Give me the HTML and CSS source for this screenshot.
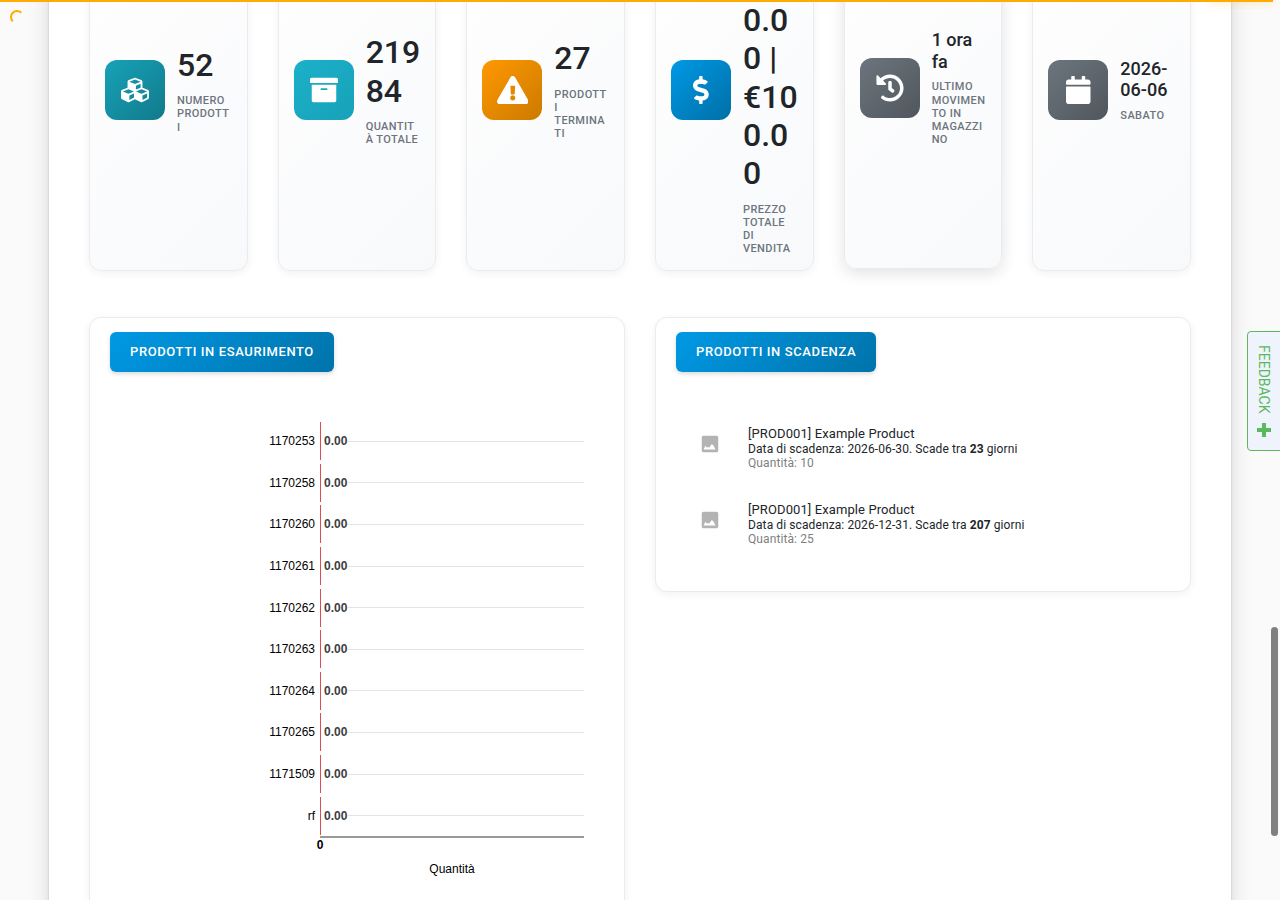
FILE: index.html
```html
<!DOCTYPE html>
<html lang="it">
<head>
    <meta charset="UTF-8">
    <meta name="viewport" content="width=device-width, initial-scale=1.0">
    <title>Dashboard magazzino</title>
    <link rel="stylesheet" href="styles.css">
</head>
<body>
    <!-- Barra di caricamento -->
    <div class="progress-bar"></div>
    <div class="spinner"></div>

    <main class="page">
        <!-- Statistiche -->
        <section class="stats">
            <div class="stat-card">
                <div class="stat-icon icon-teal">
                    <svg height="28" viewBox="0 0 512 512"><path d="M488.6 250.2L392 214V105.5c0-15-9.3-28.4-23.4-33.7l-100-37.5c-8.1-3.1-17.1-3.1-25.3 0l-100 37.5c-14.1 5.3-23.4 18.7-23.4 33.7V214l-96.6 36.2C9.3 255.5 0 268.9 0 283.9V394c0 13.6 7.7 26.1 19.9 32.2l100 50c10.1 5.1 22.1 5.1 32.2 0l103.9-52 103.9 52c10.1 5.1 22.1 5.1 32.2 0l100-50c12.2-6.1 19.9-18.6 19.9-32.2V283.9c0-15-9.3-28.4-23.4-33.7zM358 214.8l-85 31.9v-68.2l85-37v73.3zM154 104.1l102-38.2 102 38.2v.6l-102 41.4-102-41.4v-.6zm84 291.1l-85 42.5v-79.1l85-38.8v75.4zm0-112l-102 41.4-102-41.4v-.6l102-38.2 102 38.2v.6zm240 112l-85 42.5v-79.1l85-38.8v75.4zm0-112l-102 41.4-102-41.4v-.6l102-38.2 102 38.2v.6z"/></svg>
                </div>
                <div class="stat-content">
                    <div class="stat-number">52</div>
                    <div class="stat-label">Numero prodotti</div>
                </div>
            </div>
            <div class="stat-card">
                <div class="stat-icon icon-cyan">
                    <svg height="28" viewBox="0 0 512 512"><path d="M32 448c0 17.7 14.3 32 32 32h384c17.7 0 32-14.3 32-32V160H32v288zm160-212c0-6.6 5.4-12 12-12h104c6.6 0 12 5.4 12 12v8c0 6.6-5.4 12-12 12H204c-6.6 0-12-5.4-12-12v-8zM480 32H32C14.3 32 0 46.3 0 64v48c0 8.8 7.2 16 16 16h480c8.8 0 16-7.2 16-16V64c0-17.7-14.3-32-32-32z"/></svg>
                </div>
                <div class="stat-content">
                    <div class="stat-number">21984</div>
                    <div class="stat-label">Quantità totale</div>
                </div>
            </div>
            <div class="stat-card">
                <div class="stat-icon icon-orange">
                    <svg height="28" viewBox="0 0 576 512"><path d="M569.517 440.013C587.975 472.007 564.806 512 527.94 512H48.054c-36.937 0-59.999-40.055-41.577-71.987L246.423 23.985c18.467-32.009 64.72-31.951 83.154 0l239.94 416.028zM288 354c-25.405 0-46 20.595-46 46s20.595 46 46 46 46-20.595 46-46-20.595-46-46-46zm-43.673-165.346l7.418 136c.347 6.364 5.609 11.346 11.982 11.346h48.546c6.373 0 11.635-4.982 11.982-11.346l7.418-136c.375-6.874-5.098-12.654-11.982-12.654h-63.383c-6.884 0-12.356 5.78-11.981 12.654z"/></svg>
                </div>
                <div class="stat-content">
                    <div class="stat-number">27</div>
                    <div class="stat-label">Prodotti terminati</div>
                </div>
            </div>
            <div class="stat-card">
                <div class="stat-icon icon-blue">
                    <svg height="28" viewBox="0 0 288 512"><path d="M209.2 233.4l-108-31.6C88.7 198.2 80 186.5 80 173.5c0-16.3 13.2-29.5 29.5-29.5h66.3c12.2 0 24.2 3.7 34.2 10.5 6.1 4.1 14.3 3.1 19.5-2l34.8-34c7.1-6.9 6.1-18.4-1.8-24.5C238 74.8 207.4 64.1 176 64V16c0-8.8-7.2-16-16-16h-32c-8.8 0-16 7.2-16 16v48h-2.5C45.8 64-5.4 118.7.5 183.6c4.2 46.1 39.4 83.6 83.8 96.6l102.5 30c12.5 3.7 21.2 15.3 21.2 28.3 0 16.3-13.2 29.5-29.5 29.5h-66.3C100 368 88 364.3 78 357.5c-6.1-4.1-14.3-3.1-19.5 2l-34.8 34c-7.1 6.9-6.1 18.4 1.8 24.5 24.5 19.2 55.1 29.9 86.5 30v48c0 8.8 7.2 16 16 16h32c8.8 0 16-7.2 16-16v-48.2c46.6-.9 90.3-28.6 105.7-72.7 21.5-61.6-14.6-124.8-72.5-141.7z"/></svg>
                </div>
                <div class="stat-content">
                    <div class="stat-number">€100000.00 | €100.00</div>
                    <div class="stat-label">Prezzo totale di vendita</div>
                </div>
            </div>
            <div class="stat-card raised">
                <div class="stat-icon icon-gray">
                    <svg height="28" viewBox="0 0 512 512"><path d="M504 255.531c.253 136.64-111.18 248.372-247.82 248.468-59.015.042-113.223-20.53-155.822-54.911-11.077-8.94-11.905-25.541-1.839-35.607l11.267-11.267c8.609-8.609 22.353-9.551 31.891-1.984C173.062 425.135 212.781 440 256 440c101.705 0 184-82.311 184-184 0-101.705-82.311-184-184-184-48.814 0-93.149 18.969-126.068 49.932l50.754 50.754c10.08 10.08 2.941 27.314-11.313 27.314H24c-8.837 0-16-7.163-16-16V38.627c0-14.254 17.234-21.393 27.314-11.314l49.372 49.372C129.209 34.136 189.552 8 256 8c136.81 0 247.747 110.78 248 247.531zm-180.912 78.784l9.823-12.63c8.138-10.463 6.253-25.542-4.21-33.679L288 256.349V152c0-13.255-10.745-24-24-24h-16c-13.255 0-24 10.745-24 24v135.651l65.409 50.874c10.463 8.137 25.541 6.253 33.679-4.21z"/></svg>
                </div>
                <div class="stat-content">
                    <div class="stat-number small">1 ora fa</div>
                    <div class="stat-label">Ultimo movimento in magazzino</div>
                </div>
            </div>
            <div class="stat-card">
                <div class="stat-icon icon-gray">
                    <svg height="28" viewBox="0 0 448 512"><path d="M12 192h424c6.6 0 12 5.4 12 12v260c0 26.5-21.5 48-48 48H48c-26.5 0-48-21.5-48-48V204c0-6.6 5.4-12 12-12zm436-44v-36c0-26.5-21.5-48-48-48h-48V12c0-6.6-5.4-12-12-12h-40c-6.6 0-12 5.4-12 12v52H160V12c0-6.6-5.4-12-12-12h-40c-6.6 0-12 5.4-12 12v52H48C21.5 64 0 85.5 0 112v36c0 6.6 5.4 12 12 12h424c6.6 0 12-5.4 12-12z"/></svg>
                </div>
                <div class="stat-content">
                    <div class="stat-number small">2026-06-06</div>
                    <div class="stat-label">Sabato</div>
                </div>
            </div>
        </section>

        <section class="panels">
            <!-- Grafico prodotti in esaurimento -->
            <div class="panel">
                <h3 class="panel-title">Prodotti in esaurimento</h3>
                <div class="chart">
                    <div class="chart-rows">
                        <div class="chart-row"><span class="chart-name">1170253</span><div class="chart-plot"><span class="chart-value">0.00</span></div></div>
                        <div class="chart-row"><span class="chart-name">1170258</span><div class="chart-plot"><span class="chart-value">0.00</span></div></div>
                        <div class="chart-row"><span class="chart-name">1170260</span><div class="chart-plot"><span class="chart-value">0.00</span></div></div>
                        <div class="chart-row"><span class="chart-name">1170261</span><div class="chart-plot"><span class="chart-value">0.00</span></div></div>
                        <div class="chart-row"><span class="chart-name">1170262</span><div class="chart-plot"><span class="chart-value">0.00</span></div></div>
                        <div class="chart-row"><span class="chart-name">1170263</span><div class="chart-plot"><span class="chart-value">0.00</span></div></div>
                        <div class="chart-row"><span class="chart-name">1170264</span><div class="chart-plot"><span class="chart-value">0.00</span></div></div>
                        <div class="chart-row"><span class="chart-name">1170265</span><div class="chart-plot"><span class="chart-value">0.00</span></div></div>
                        <div class="chart-row"><span class="chart-name">1171509</span><div class="chart-plot"><span class="chart-value">0.00</span></div></div>
                        <div class="chart-row"><span class="chart-name">rf</span><div class="chart-plot"><span class="chart-value">0.00</span></div></div>
                    </div>
                    <div class="chart-axis">
                        <div class="chart-tick">0</div>
                        <div class="chart-caption">Quantità</div>
                    </div>
                </div>
            </div>

            <!-- Elenco prodotti in scadenza -->
            <div class="panel">
                <h3 class="panel-title">Prodotti in scadenza</h3>
                <ul class="products">
                    <li class="product">
                        <svg class="product-icon" width="22" height="22" viewBox="0 0 24 24"><path d="M21 19V5c0-1.100-.9-2-2-2H5c-1.100 0-2 .9-2 2v14c0 1.100.9 2 2 2h14c1.100 0 2-.9 2-2zM5 18l2-4 2 2 1-1 1 1 3-4 2 2 2 4z"/></svg>
                        <div>
                            <div class="product-name">[PROD001] Example Product</div>
                            <div class="product-expiry">Data di scadenza: 2026-06-30. Scade tra <b>23</b> giorni</div>
                            <div class="product-qty">Quantità: 10</div>
                        </div>
                    </li>
                    <li class="product">
                        <svg class="product-icon" width="22" height="22" viewBox="0 0 24 24"><path d="M21 19V5c0-1.100-.9-2-2-2H5c-1.100 0-2 .9-2 2v14c0 1.100.9 2 2 2h14c1.100 0 2-.9 2-2zM5 18l2-4 2 2 1-1 1 1 3-4 2 2 2 4z"/></svg>
                        <div>
                            <div class="product-name">[PROD001] Example Product</div>
                            <div class="product-expiry">Data di scadenza: 2026-12-31. Scade tra <b>207</b> giorni</div>
                            <div class="product-qty">Quantità: 25</div>
                        </div>
                    </li>
                </ul>
            </div>
        </section>
    </main>

    <button class="feedback" type="button">
        FEEDBACK
        <svg width="14" height="14" viewBox="0 0 14 14"><path d="M5 0h4v5h5v4H9v5H5V9H0V5h5z"/></svg>
    </button>
    <div class="scroll-thumb"></div>
</body>
</html>
```

FILE: styles.css
```css
* {
    box-sizing: border-box;
}
body {
    margin: 0;
    height: 100vh;
    overflow: hidden;
    font-family: Roboto, sans-serif;
    color: #212529;
    background-color: #fafafa;
}
.progress-bar {
    position: fixed;
    top: 0;
    left: 0;
    right: 7px;
    height: 2px;
    background-color: #ffab00;
    z-index: 10;
}
.progress-bar::after {
    content: "";
    position: absolute;
    right: 0;
    width: 64px;
    height: 2px;
    box-shadow: 0 0 8px rgba(255, 171, 0, 0.6);
}
.spinner {
    position: fixed;
    top: 10px;
    left: 10px;
    width: 14px;
    height: 14px;
    border: 2px solid transparent;
    border-top-color: #ffab00;
    border-left-color: #ffab00;
    border-radius: 50%;
    z-index: 10;
}
.page {
    margin: -132px 49px 0;
    padding: 40px;
    min-height: 1100px;
    background-color: #fff;
    box-shadow: 0 0 2px rgba(0, 0, 0, 0.2), 0 0 20px rgba(0, 0, 0, 0.14);
}

/* Statistiche */
.stats {
    display: grid;
    grid-template-columns: repeat(6, 1fr);
    gap: 30px;
    margin-bottom: 46px;
}
.stat-card {
    display: flex;
    align-items: center;
    gap: 12px;
    min-width: 0;
    padding: 15px;
    border: 1px solid #e9ecef;
    border-radius: 12px;
    background: linear-gradient(135deg, #fff, #f8f9fb);
    box-shadow: 0 2px 8px rgba(0, 0, 0, 0.06);
}
.stat-card.raised {
    transform: translateY(-2px);
    box-shadow: 0 4px 16px rgba(0, 0, 0, 0.12);
}
.stat-icon {
    display: flex;
    align-items: center;
    justify-content: center;
    flex-shrink: 0;
    width: 60px;
    height: 60px;
    border-radius: 12px;
}
.stat-icon svg {
    fill: #fff;
}
.icon-teal {
    background: linear-gradient(135deg, #17a2b8, #117a8b);
}
.icon-cyan {
    background: linear-gradient(135deg, #1cb0ca, #17a2b8);
}
.icon-orange {
    background: linear-gradient(135deg, #ff9800, #cc7a00);
}
.icon-blue {
    background: linear-gradient(135deg, #0099e5, #006fa6);
}
.icon-gray {
    background: linear-gradient(135deg, #6c757d, #50565e);
}
.stat-content {
    flex: 1;
    min-width: 0;
    overflow-wrap: anywhere;
}
.stat-number {
    margin-bottom: 10px;
    font-size: 32px;
    font-weight: 500;
    line-height: 1.2;
}
.stat-number.small {
    margin-bottom: 8px;
    font-size: 18px;
}
.stat-label {
    font-size: 11px;
    font-weight: 500;
    line-height: 1.2;
    letter-spacing: 0.4px;
    text-transform: uppercase;
    color: #6c757d;
}

/* Pannelli */
.panels {
    display: grid;
    grid-template-columns: 1fr 1fr;
    align-items: start;
    gap: 30px;
}
.panel {
    padding: 14px 20px 20px;
    border: 1px solid #e9ecef;
    border-radius: 12px;
    background-color: #fff;
    box-shadow: 0 2px 8px rgba(0, 0, 0, 0.06);
}
.panel-title {
    display: inline-block;
    margin: 0;
    padding: 0 20px;
    border-radius: 6px;
    background: linear-gradient(135deg, #0099e5, #0073aa);
    box-shadow: 0 2px 4px rgba(0, 0, 0, 0.15);
    color: #fff;
    font-size: 13px;
    font-weight: 500;
    line-height: 40px;
    letter-spacing: 0.6px;
    text-transform: uppercase;
    vertical-align: top;
}

/* Grafico */
.chart {
    padding: 48px 20px 14px 0;
    font-family: "Liberation Sans", Arial, sans-serif;
    font-size: 12px;
    color: #000;
}
.chart-rows {
    display: flex;
    flex-direction: column;
    height: 416px;
}
.chart-row {
    display: grid;
    grid-template-columns: 205px 1fr;
    gap: 5px;
    align-items: center;
    flex: 1;
}
.chart-name {
    text-align: right;
}
.chart-plot {
    display: flex;
    align-items: center;
    height: 38px;
    border-left: 1px solid #dc4c53;
}
.chart-plot::after {
    content: "";
    flex: 1;
    height: 1px;
    background-color: #e4e4e4;
}
.chart-value {
    padding-left: 3px;
    font-weight: bold;
    color: #404040;
}
.chart-axis {
    margin-left: 210px;
    border-top: 2px solid #999;
    line-height: 14px;
}
.chart-tick {
    width: 8px;
    margin-left: -4px;
    text-align: center;
    font-weight: bold;
}
.chart-caption {
    margin-top: 10px;
    text-align: center;
}

/* Prodotti in scadenza */
.products {
    list-style: none;
    margin: 0;
    padding: 36px 23px 11px;
}
.product {
    display: flex;
    align-items: flex-start;
    gap: 27px;
    height: 76px;
    padding-top: 18px;
}
.product-icon {
    flex-shrink: 0;
    margin-top: 7px;
    fill: #b3b3b3;
}
.product-name {
    font-size: 13px;
    line-height: 16px;
    letter-spacing: 0.1px;
}
.product-expiry,
.product-qty {
    font-size: 12px;
    line-height: 14px;
    letter-spacing: 0.1px;
}
.product-qty {
    color: #808080;
}

/* Pulsante feedback */
.feedback {
    position: fixed;
    top: 331px;
    right: -1px;
    display: flex;
    align-items: center;
    gap: 9px;
    padding: 13px 8px;
    border: 1px solid #5cb85c;
    border-radius: 4px 0 0 4px;
    background-color: #eff4fc;
    color: #5cb85c;
    font-family: Roboto, sans-serif;
    font-size: 14px;
    line-height: 16px;
    writing-mode: vertical-rl;
    cursor: pointer;
}
.feedback svg {
    fill: #5cb85c;
}
.scroll-thumb {
    position: fixed;
    top: 627px;
    right: 2px;
    width: 7px;
    height: 209px;
    border-radius: 4px;
    background-color: #808080;
}
```
